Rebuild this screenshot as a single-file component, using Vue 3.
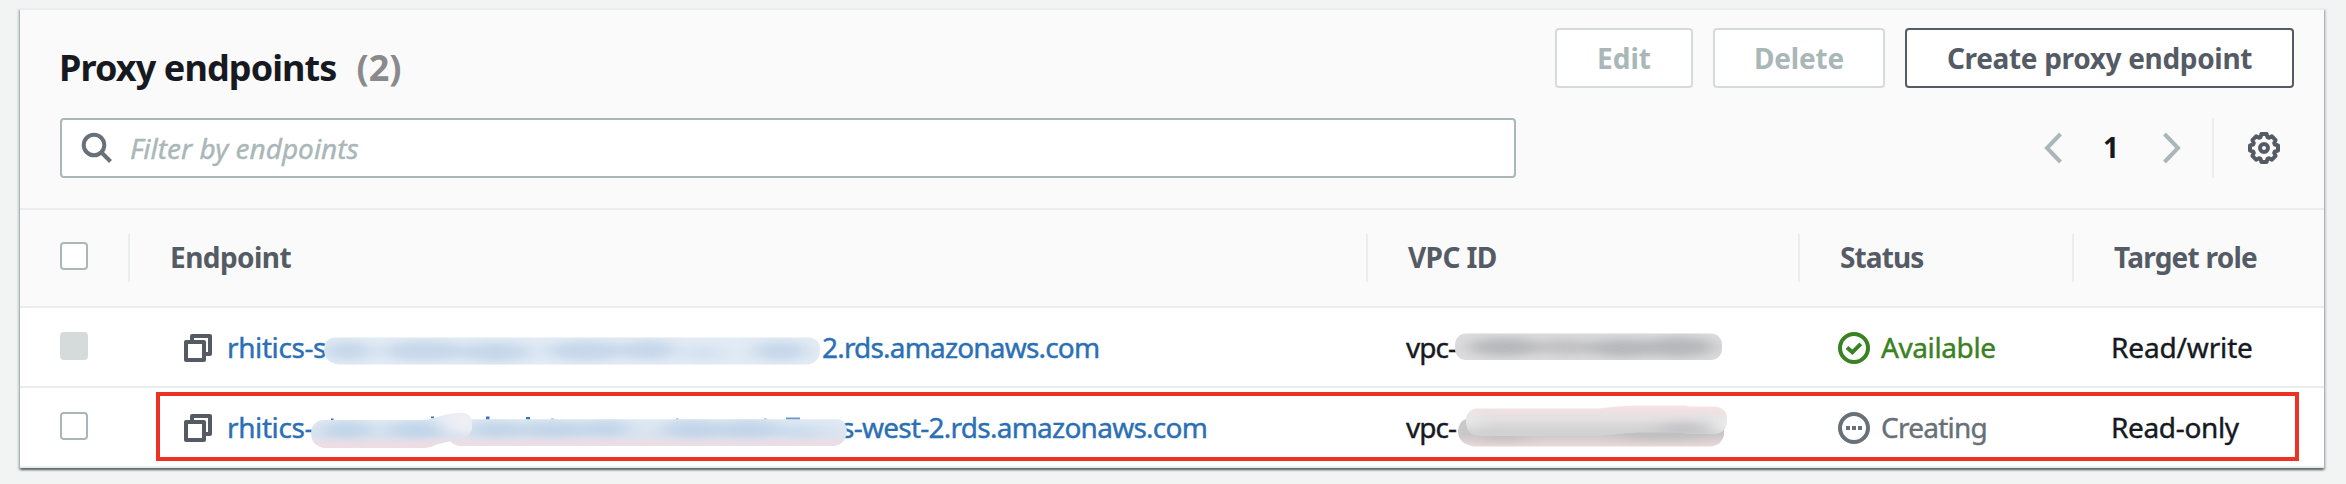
<script setup>
const columns = [
  { key: 'endpoint', label: 'Endpoint' },
  { key: 'vpc', label: 'VPC ID' },
  { key: 'status', label: 'Status' },
  { key: 'role', label: 'Target role' },
]
</script>

<template>
  <div class="page">
    <section class="panel">
      <header class="toolbar">
        <div class="title-row">
          <h2 class="title">Proxy endpoints<span class="count">(2)</span></h2>
          <div class="actions">
            <button class="btn edit" disabled>Edit</button>
            <button class="btn delete" disabled>Delete</button>
            <button class="btn create">Create proxy endpoint</button>
          </div>
        </div>
        <div class="filter-row">
          <div class="search">
            <svg class="search-icon" viewBox="0 0 32 32" fill="none" stroke="#687078" stroke-width="4">
              <circle cx="13" cy="13" r="10.3" />
              <path d="M20 20 L29.5 29.5" />
            </svg>
            <span class="placeholder">Filter by endpoints</span>
          </div>
          <div class="pager">
            <svg class="chevron" viewBox="0 0 20 32"><path d="M17.5 2 L4 16 L17.5 30" /></svg>
            <span class="page-number">1</span>
            <svg class="chevron next" viewBox="0 0 20 32"><path d="M2.5 2 L16 16 L2.5 30" /></svg>
            <span class="pager-line"></span>
            <svg class="gear" viewBox="0 0 32 32" fill="none" stroke="#545b64" stroke-width="4" stroke-linejoin="round">
              <path d="M13.4 2 H18.6 L19.5 5.2 L21 5.8 L23.9 4.4 L27.6 8.1 L26.2 11 L26.8 12.5 L30 13.4 V18.6 L26.8 19.5 L26.2 21 L27.6 23.9 L23.9 27.6 L21 26.2 L19.5 26.8 L18.6 30 H13.4 L12.5 26.8 L11 26.2 L8.1 27.6 L4.4 23.9 L5.8 21 L5.2 19.5 L2 18.6 V13.4 L5.2 12.5 L5.8 11 L4.4 8.1 L8.1 4.4 L11 5.8 L12.5 5.2 Z" />
              <circle cx="16" cy="16" r="4" />
            </svg>
          </div>
        </div>
      </header>

      <div class="grid head">
        <div class="check-cell"><span class="checkbox"></span></div>
        <div v-for="c in columns" :key="c.key" class="th" :class="c.key">{{ c.label }}</div>
      </div>

      <div class="grid row">
        <div class="check-cell"><span class="checkbox disabled"></span></div>
        <div class="cell link">
          <svg class="copy" viewBox="0 0 28 28"><path d="M8 6 V2 H26 V20 H22" /><rect x="2" y="8" width="18" height="18" /></svg>
          <span class="prefix first">rhitics-s</span>
          <svg class="smudge url-one" viewBox="0 0 496 28">
            <defs>
              <clipPath id="urlOne"><path d="M10 0.5 H486 Q496 2 496 12 Q496 27 482 27.5 H14 Q0 25 0 12 Q1 1 10 0.5 Z" /></clipPath>
              <filter id="soft" filterUnits="userSpaceOnUse" x="-60" y="-40" width="660" height="120" color-interpolation-filters="sRGB"><feGaussianBlur stdDeviation="10 4" /></filter>
            </defs>
            <g clip-path="url(#urlOne)">
              <rect width="496" height="28" fill="#e3ecf5" />
              <g filter="url(#soft)" fill="#c6d7ea">
                <ellipse cx="24" cy="14" rx="24" ry="10" />
                <ellipse cx="100" cy="14" rx="42" ry="10" />
                <ellipse cx="172" cy="15" rx="36" ry="10" />
                <ellipse cx="262" cy="14" rx="40" ry="10" />
                <ellipse cx="325" cy="13" rx="28" ry="10" />
                <ellipse cx="380" cy="16" rx="20" ry="7" opacity=".6" />
                <ellipse cx="456" cy="14" rx="28" ry="10" />
              </g>
            </g>
          </svg>
          <span class="tail-one">2.rds.amazonaws.com</span>
        </div>
        <div class="cell vpc-cell">
          <span class="vpc-text">vpc-</span>
          <svg class="smudge vpc-one" viewBox="0 0 268 28">
            <defs><clipPath id="vpcOne"><rect y="0.5" width="267" height="26.5" rx="11" /></clipPath></defs>
            <g clip-path="url(#vpcOne)">
              <rect width="268" height="28" fill="#dcdcde" />
              <g filter="url(#soft)" fill="#b6b7ba">
                <ellipse cx="50" cy="14" rx="36" ry="9" />
                <ellipse cx="110" cy="14" rx="28" ry="8" opacity=".7" />
                <ellipse cx="168" cy="15" rx="36" ry="9" />
                <ellipse cx="224" cy="14" rx="36" ry="10" />
              </g>
            </g>
          </svg>
        </div>
        <div class="cell status available">
          <svg class="status-icon" viewBox="0 0 32 32" fill="none" stroke="currentColor" stroke-width="4">
            <circle cx="16" cy="16" r="14" /><path d="M9 15.4 L14.4 20.3 L22.8 11.8" />
          </svg>
          <span>Available</span>
        </div>
        <div class="cell role rw">Read/write</div>
      </div>

      <div class="grid row last">
        <div class="check-cell"><span class="checkbox"></span></div>
        <div class="cell link">
          <svg class="copy" viewBox="0 0 28 28"><path d="M8 6 V2 H26 V20 H22" /><rect x="2" y="8" width="18" height="18" /></svg>
          <span class="prefix second">rhitics-</span>
          <span class="tail-two">s-west-2.rds.amazonaws.com</span>
          <svg class="smudge url-two" viewBox="0 0 536 36">
            <defs>
              <clipPath id="urlTwoA"><path d="M12 8 H110 C128 7 128 1.5 152 1 Q161 2 161 12 V17 Q160 24 149 27 L127 32 Q120 35.500 112 36 H13 Q0 33 0 21 Q1 9 12 8 Z" /></clipPath>
              <clipPath id="urlTwoB"><path d="M136 7.300 H528 Q536 10 536 20 Q534 33 522 34 H149 Q140 33 136 24 Z" /></clipPath>
              <linearGradient id="rosy" x1="0" y1="0" x2="0" y2="1">
                <stop offset="0.2" stop-color="#e0eaf4" /><stop offset="0.7" stop-color="#dbe4f0" /><stop offset="1" stop-color="#eddde4" />
              </linearGradient>
              <linearGradient id="pinkBase" x1="0" y1="0" x2="0" y2="1">
                <stop offset="0.62" stop-color="#eedde3" stop-opacity="0" /><stop offset="1" stop-color="#eedde3" />
              </linearGradient>
            </defs>
            <g fill="#3a76b5">
              <rect x="20" y="6.500" width="2.500" height="2" /><rect x="120" y="4.500" width="3" height="2" />
              <rect x="175" y="4.500" width="3.500" height="4" /><rect x="215" y="5" width="4" height="3" />
              <rect x="240" y="6.500" width="3" height="1.500" opacity=".6" />
              <rect x="365" y="6.500" width="2.500" height="1.500" opacity=".7" /><rect x="453" y="6.500" width="2.500" height="1.500" opacity=".7" />
              <rect x="475" y="5.500" width="14" height="2.500" opacity=".75" />
            </g>
            <g clip-path="url(#urlTwoB)">
              <rect width="536" height="36" fill="url(#rosy)" />
              <g filter="url(#soft)" fill="#c2d5e9">
                <ellipse cx="185" cy="18" rx="28" ry="9" /><ellipse cx="243" cy="18" rx="34" ry="9" />
                <ellipse cx="295" cy="17" rx="24" ry="9" /><ellipse cx="382" cy="18" rx="32" ry="10" />
                <ellipse cx="438" cy="18" rx="32" ry="10" /><ellipse cx="490" cy="20" rx="24" ry="7" opacity=".6" />
              </g>
              <rect width="536" height="36" fill="url(#pinkBase)" />
            </g>
            <g clip-path="url(#urlTwoA)">
              <rect width="162" height="36" fill="url(#rosy)" />
              <g filter="url(#soft)" fill="#c2d5e9">
                <ellipse cx="36" cy="19" rx="26" ry="10" /><ellipse cx="105" cy="19" rx="30" ry="10" />
              </g>
              <ellipse cx="153" cy="8" rx="20" ry="13" fill="#efeff4" filter="url(#soft)" />
              <rect width="162" height="36" fill="url(#pinkBase)" />
            </g>
          </svg>
        </div>
        <div class="cell vpc-cell">
          <span class="vpc-text">vpc-</span>
          <svg class="smudge vpc-two" viewBox="0 0 272 42">
            <defs>
              <clipPath id="vpcTwoA"><path d="M19 3.500 H140 Q165 0.500 180 0.500 H228 L231 1.500 H257 Q269 3 269 14 Q269 28 257 29 H228 L222 27.500 H180 Q165 28 140 31 H19 Q8 29 8 16 Q8 5 19 3.500 Z" /></clipPath>
              <clipPath id="vpcTwoB"><path d="M8 14 H266 V30 Q264 40 254 41.500 H16 Q0 39 0 26 Q1 16 8 14 Z" /></clipPath>
              <linearGradient id="vpcTop" gradientUnits="userSpaceOnUse" x1="0" y1="0" x2="0" y2="32">
                <stop offset="0.05" stop-color="#f6e2e4" /><stop offset="0.45" stop-color="#e2e0e1" /><stop offset="0.8" stop-color="#d2d2d3" />
              </linearGradient>
              <linearGradient id="vpcLow" gradientUnits="userSpaceOnUse" x1="0" y1="0" x2="0" y2="42">
                <stop offset="0.7" stop-color="#c9c9ca" /><stop offset="1" stop-color="#eed9db" />
              </linearGradient>
            </defs>
            <g clip-path="url(#vpcTwoB)">
              <rect width="272" height="42" fill="url(#vpcLow)" />
              <g filter="url(#soft)" fill="#b5b5b7" opacity=".6">
                <ellipse cx="45" cy="31" rx="24" ry="5" /><ellipse cx="205" cy="29" rx="48" ry="6" />
              </g>
            </g>
            <g clip-path="url(#vpcTwoA)">
              <rect width="272" height="42" fill="url(#vpcTop)" />
              <g filter="url(#soft)">
                <ellipse cx="224" cy="24" rx="24" ry="6" fill="#c2c2c4" />
                <ellipse cx="270" cy="20" rx="12" ry="10" fill="#f0f0f0" />
                <ellipse cx="10" cy="15" rx="10" ry="10" fill="#eaeaea" />
              </g>
            </g>
          </svg>
        </div>
        <div class="cell status creating">
          <svg class="status-icon" viewBox="0 0 32 32">
            <circle cx="16" cy="16" r="14" fill="none" stroke="currentColor" stroke-width="4" />
            <g fill="currentColor"><rect x="8" y="14" width="4" height="4" /><rect x="14" y="14" width="4" height="4" /><rect x="20" y="14" width="4" height="4" /></g>
          </svg>
          <span>Creating</span>
        </div>
        <div class="cell role ro">Read-only</div>
        <div class="highlight"></div>
      </div>
    </section>
  </div>
</template>

<style>
body { background: #f2f3f3; }
</style>

<style scoped>
.page {
  box-sizing: border-box;
  width: 2346px;
  height: 484px;
  padding: 8px 22px 0 20px;
  overflow: hidden;
  background: #f2f4f4;
  font-family: "Noto Sans", sans-serif;
  font-size: 28px;
  line-height: 36px;
  color: #16191f;
}
.panel {
  box-sizing: border-box;
  height: 460px;
  border-top: 2px solid #eaeded;
  background: #fff;
  box-shadow: 0 2px 2px 0 rgba(0, 18, 26, .5), 2px 2px 2px 0 rgba(0, 28, 36, .15), -2px 2px 2px 0 rgba(0, 28, 36, .15);
}
.toolbar {
  box-sizing: border-box;
  height: 200px;
  padding: 18px 30px 0 40px;
  border-bottom: 2px solid #eaeded;
  background: #fafafa;
}
.title-row, .filter-row { display: flex; justify-content: space-between; height: 60px; }
.title { margin: 18px 0 0 -1px; font-size: 36px; line-height: 44px; letter-spacing: -.9px; font-weight: 700; white-space: nowrap; }
.count { margin-left: 20px; font-weight: 700; letter-spacing: 0; color: #8a8a8c; }
.actions { display: flex; gap: 20px; }
.btn {
  box-sizing: border-box;
  height: 60px;
  padding: 0 0 1px;
  border: 2px solid #545b64;
  border-radius: 4px;
  background: #fff;
  color: #545b64;
  font: 700 28px/36px "Noto Sans", sans-serif;
  white-space: nowrap;
}
.btn:disabled { border-color: #d5dbdb; color: #aab7b8; }
.edit { width: 138px; }
.delete { width: 172px; letter-spacing: -.2px; }
.create { width: 389px; letter-spacing: -.33px; }
.filter-row { margin-top: 30px; }
.search {
  box-sizing: border-box;
  display: flex;
  align-items: center;
  width: 1456px;
  height: 60px;
  padding-left: 19px;
  border: 2px solid #aab7b8;
  border-radius: 4px;
  background: #fff;
}
.search-icon { width: 32px; height: 32px; }
.placeholder { margin-left: 17px; font-style: italic; color: #aab7b8; -webkit-text-stroke: .4px; }
.pager { display: flex; align-items: center; height: 60px; margin-right: 14px; }
.chevron { width: 20px; height: 32px; fill: none; stroke: #aab7b8; stroke-width: 4; }
.page-number { width: 16px; margin: -2px 0 0 40px; font-weight: 700; }
.next { margin-left: 43px; }
.pager-line { width: 2px; height: 60px; margin: 0 34px 0 30px; background: #eaeded; }
.gear { width: 32px; height: 32px; }
.grid { position: relative; display: grid; grid-template-columns: 108px 1238px 432px 274px 252px; align-items: center; box-sizing: border-box; }
.head { height: 98px; border-bottom: 2px solid #eaeded; background: #fafafa; }
.check-cell { padding-left: 40px; }
.checkbox { display: block; box-sizing: border-box; width: 28px; height: 28px; border: 2px solid #aab7b8; border-radius: 4px; background: #fff; }
.head .checkbox { margin-top: -4px; }
.row .checkbox { margin-top: -2px; }
.checkbox.disabled { border-color: #d5dbdb; background: #d5dbdb; }
.th { box-sizing: border-box; height: 48px; padding-left: 40px; border-left: 2px solid #eaeded; line-height: 47px; font-weight: 700; color: #545b64; white-space: nowrap; }
.th.endpoint { letter-spacing: -.55px; }
.th.vpc { padding-left: 40px; letter-spacing: -.6px; }
.th.status { padding-left: 40px; letter-spacing: -.9px; }
.th.role { padding-left: 40px; letter-spacing: -.75px; }
.row { height: 80px; border-bottom: 2px solid #eaeded; }
.cell { position: relative; display: flex; align-items: center; height: 36px; white-space: nowrap; -webkit-text-stroke: .4px; }
.link { padding-left: 56px; color: #2b6fb5; }
.copy { flex: none; width: 28px; height: 28px; margin: 2px 15px 0 0; fill: none; stroke: #545b64; stroke-width: 4; stroke-linejoin: round; }
.prefix { flex: none; width: 97px; letter-spacing: -.4px; }
.smudge { flex: none; display: block; }
.url-one { position: relative; width: 496px; height: 28px; margin-top: 7px; }
.tail-one { margin-left: 2px; letter-spacing: -.82px; }
.prefix.second { width: 614px; }
.tail-two { letter-spacing: -.75px; }
.url-two { position: absolute; left: 183px; top: 3px; width: 536px; height: 36px; }
.vpc-cell { padding-left: 40px; }
.vpc-text { letter-spacing: -1px; }
.vpc-one { position: absolute; left: 89px; top: 4px; width: 268px; height: 28px; }
.vpc-two { position: absolute; left: 92px; top: -4px; width: 272px; height: 42px; }
.status { padding-left: 40px; }
.cell.status { gap: 11px; }
.status-icon { width: 32px; height: 32px; margin-top: 2px; }
.available { color: #3a8121; letter-spacing: -.4px; }
.creating { color: #687078; letter-spacing: -.75px; }
.cell.role { padding-left: 39px; }
.rw { letter-spacing: -.15px; }
.ro { letter-spacing: -.35px; }
.highlight { position: absolute; left: 136px; top: 4px; box-sizing: border-box; width: 2143px; height: 69px; border: 4px solid #ec3323; }
</style>
